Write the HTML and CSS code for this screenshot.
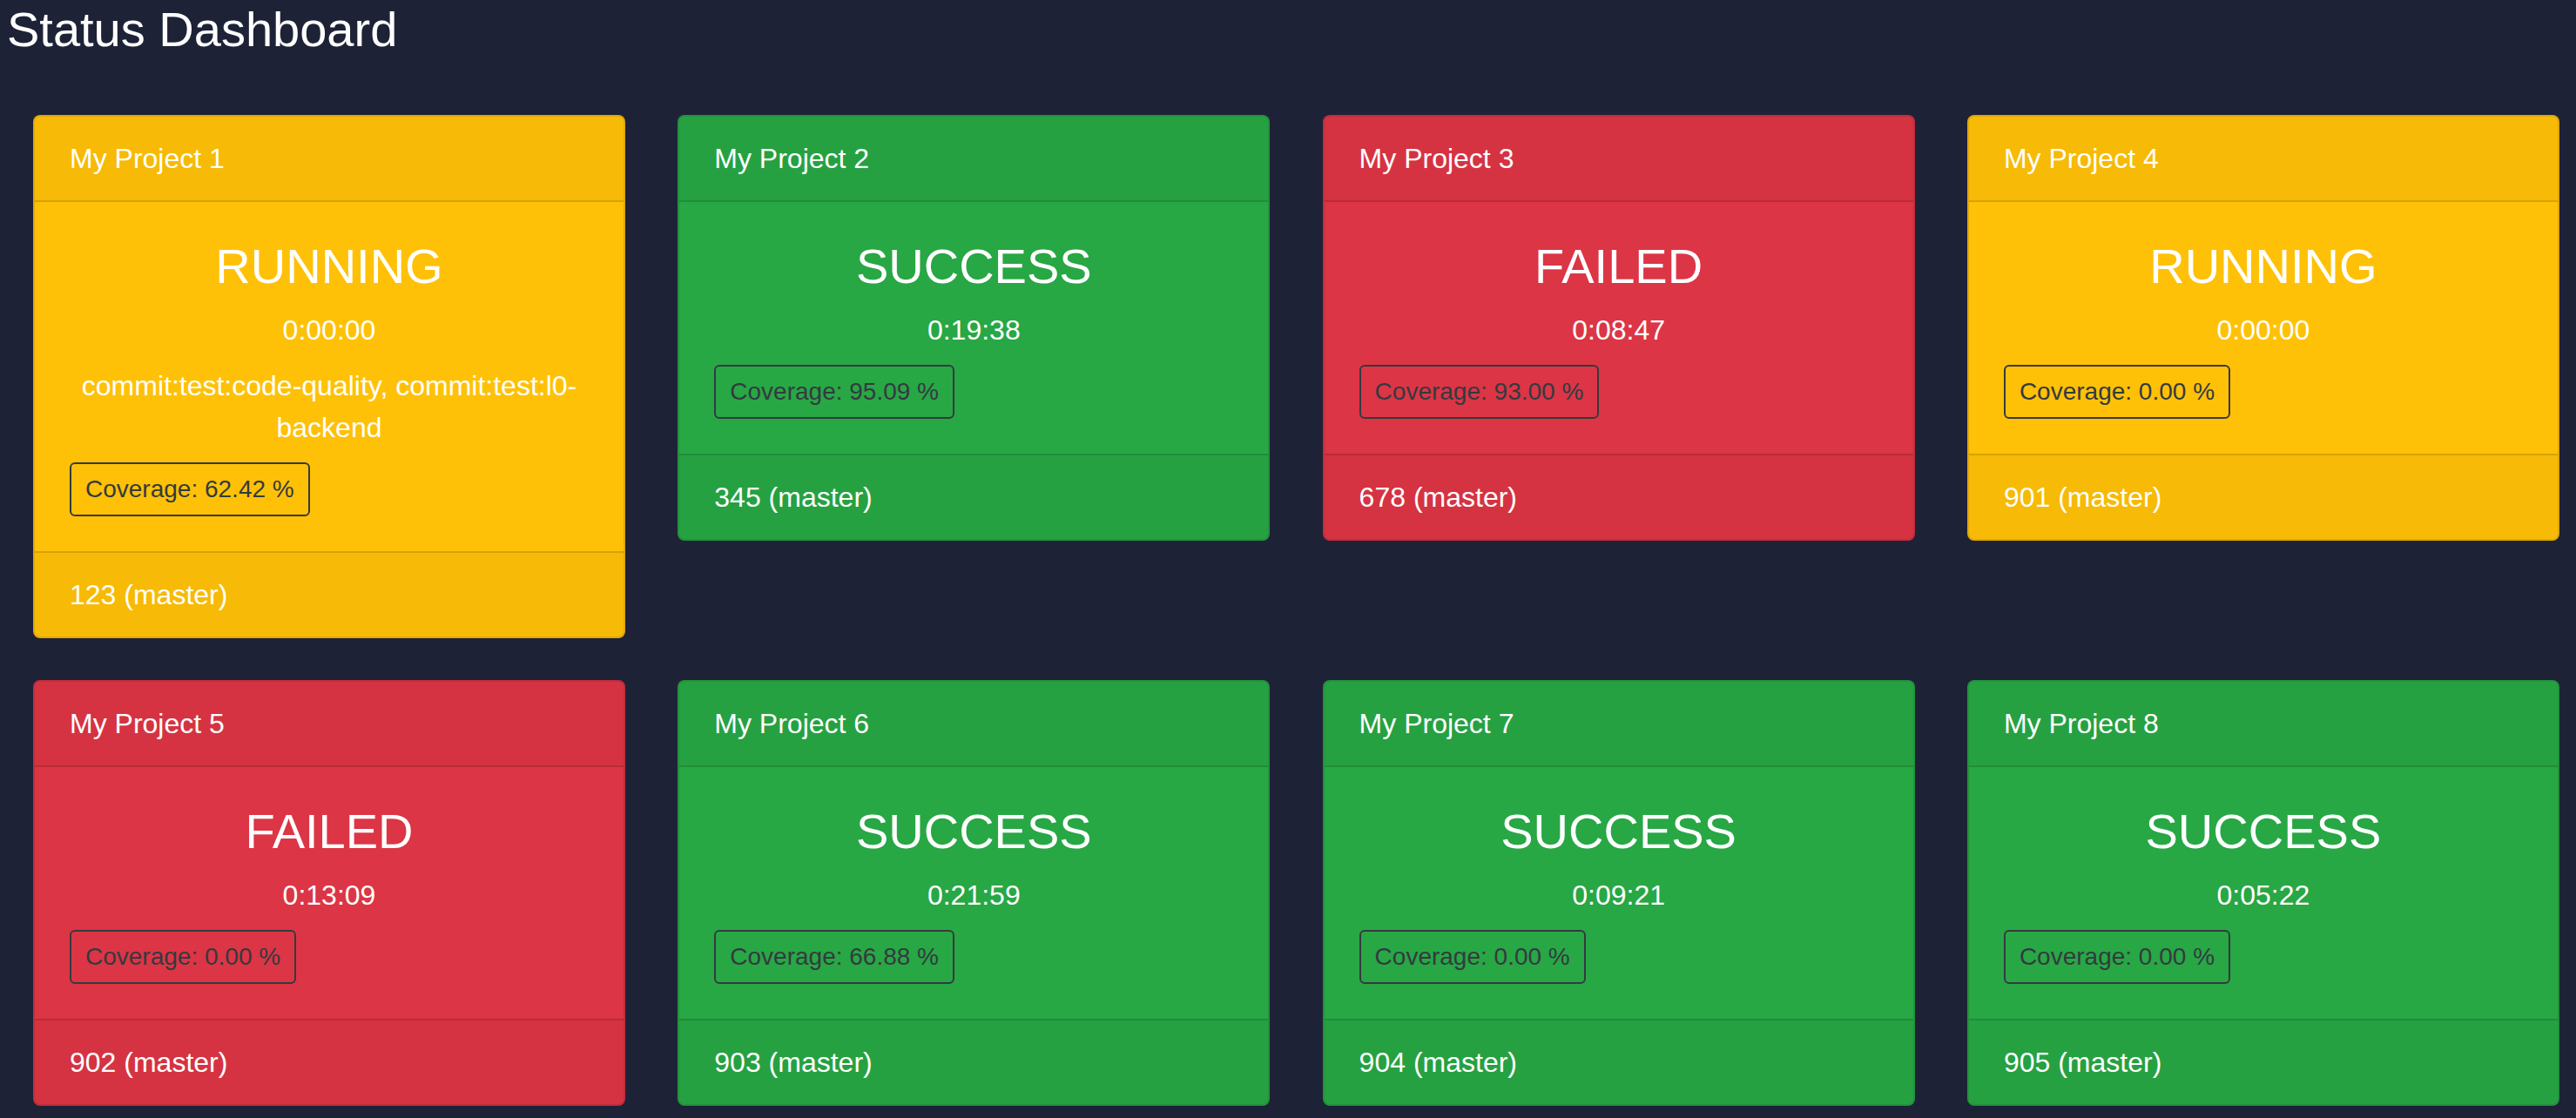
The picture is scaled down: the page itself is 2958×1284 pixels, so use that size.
FILE: index.html
```html
<!DOCTYPE html>
<html lang="en">
<head>
<meta charset="utf-8">
<title>Status Dashboard</title>
<link rel="stylesheet" href="styles.css">
</head>
<body>
<div class="page">
  <h1 class="title">Status Dashboard</h1>
  <div class="grid">
    <div class="card card-running">
      <div class="card-header">My Project 1</div>
      <div class="card-body">
        <h3 class="status">RUNNING</h3>
        <div class="time">0:00:00</div>
        <div class="stages">commit:test:code-quality, commit:test:l0-backend</div>
        <span class="coverage">Coverage: 62.42 %</span>
      </div>
      <div class="card-footer">123 (master)</div>
    </div>
    <div class="card card-success">
      <div class="card-header">My Project 2</div>
      <div class="card-body">
        <h3 class="status">SUCCESS</h3>
        <div class="time">0:19:38</div>
        <span class="coverage">Coverage: 95.09 %</span>
      </div>
      <div class="card-footer">345 (master)</div>
    </div>
    <div class="card card-failed">
      <div class="card-header">My Project 3</div>
      <div class="card-body">
        <h3 class="status">FAILED</h3>
        <div class="time">0:08:47</div>
        <span class="coverage">Coverage: 93.00 %</span>
      </div>
      <div class="card-footer">678 (master)</div>
    </div>
    <div class="card card-running">
      <div class="card-header">My Project 4</div>
      <div class="card-body">
        <h3 class="status">RUNNING</h3>
        <div class="time">0:00:00</div>
        <span class="coverage">Coverage: 0.00 %</span>
      </div>
      <div class="card-footer">901 (master)</div>
    </div>
    <div class="card card-failed">
      <div class="card-header">My Project 5</div>
      <div class="card-body">
        <h3 class="status">FAILED</h3>
        <div class="time">0:13:09</div>
        <span class="coverage">Coverage: 0.00 %</span>
      </div>
      <div class="card-footer">902 (master)</div>
    </div>
    <div class="card card-success">
      <div class="card-header">My Project 6</div>
      <div class="card-body">
        <h3 class="status">SUCCESS</h3>
        <div class="time">0:21:59</div>
        <span class="coverage">Coverage: 66.88 %</span>
      </div>
      <div class="card-footer">903 (master)</div>
    </div>
    <div class="card card-success">
      <div class="card-header">My Project 7</div>
      <div class="card-body">
        <h3 class="status">SUCCESS</h3>
        <div class="time">0:09:21</div>
        <span class="coverage">Coverage: 0.00 %</span>
      </div>
      <div class="card-footer">904 (master)</div>
    </div>
    <div class="card card-success">
      <div class="card-header">My Project 8</div>
      <div class="card-body">
        <h3 class="status">SUCCESS</h3>
        <div class="time">0:05:22</div>
        <span class="coverage">Coverage: 0.00 %</span>
      </div>
      <div class="card-footer">905 (master)</div>
    </div>
  </div>
</div>
</body>
</html>
```

FILE: styles.css
```css
html, body {
  margin: 0;
  padding: 0;
  background: #1e2237;
}

body {
  font-family: "Liberation Sans", Arial, sans-serif;
  font-size: 32px;
  line-height: 48px;
  color: #ffffff;
}

.page {
  padding: 0 8px;
}

.title {
  margin: 0 0 65px 0;
  font-size: 56px;
  line-height: 67px;
  font-weight: 400;
  color: #ffffff;
}

.grid {
  display: grid;
  grid-template-columns: repeat(4, 680px);
  column-gap: 60.3px;
  row-gap: 48px;
  align-items: start;
  padding-left: 30px;
}

.card {
  display: flex;
  flex-direction: column;
  border: 2px solid rgba(0, 0, 0, 0.125);
  border-radius: 8px;
  overflow: hidden;
}

.card-running { background: #ffc107; }
.card-success { background: #28a745; }
.card-failed  { background: #dc3545; }

.card-header {
  padding: 24px 40px;
  background: rgba(0, 0, 0, 0.03);
  border-bottom: 2px solid rgba(0, 0, 0, 0.125);
}

.card-body {
  padding: 40px;
}

.card-footer {
  padding: 24px 40px;
  background: rgba(0, 0, 0, 0.03);
  border-top: 2px solid rgba(0, 0, 0, 0.125);
}

.status {
  margin: 0 0 16px 0;
  font-size: 56px;
  line-height: 67.2px;
  font-weight: 400;
  text-align: center;
}

.time {
  margin-bottom: 16px;
  text-align: center;
}

.stages {
  margin-bottom: 16px;
  text-align: center;
}

.coverage {
  display: block;
  width: fit-content;
  padding: 8px 16px;
  border: 2px solid #343a40;
  border-radius: 6px;
  font-size: 28px;
  line-height: 42px;
  color: #343a40;
}
```
